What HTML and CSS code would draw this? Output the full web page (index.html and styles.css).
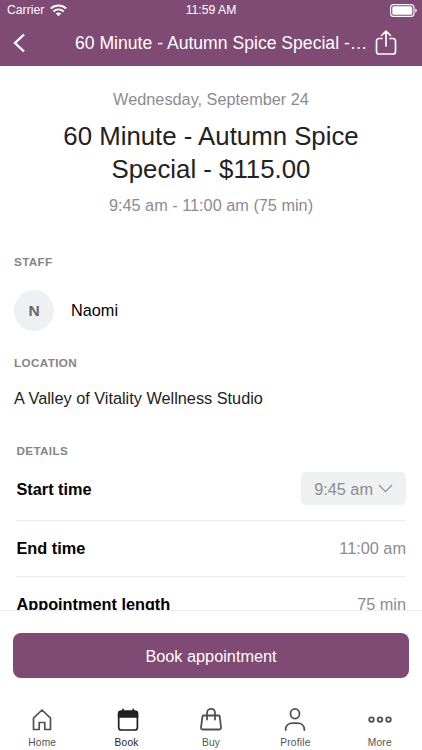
FILE: index.html
```html
<!DOCTYPE html>
<html lang="en">
<head>
<meta charset="utf-8">
<title>Book appointment</title>
<link rel="stylesheet" href="styles.css">
</head>
<body>
<div class="app">
  <header class="top">
    <div class="status">
      <div class="carrier"><span>Carrier</span>
        <svg width="17" height="13" viewBox="0 0 17 13" fill="none" stroke="#fff" stroke-width="2"><path d="M.8 4.6C5.3.6 11.700.6 16.200 4.600M3.400 7.500c3-2.700 7.200-2.700 10.200 0"/><path d="M8.500 12.300 5.700 9.600c1.600-1.400 4-1.400 5.600 0z" fill="#fff" stroke="none"/></svg>
      </div>
      <div class="clock">11:59 AM</div>
      <svg class="battery" width="28" height="13" viewBox="0 0 28 13"><rect x=".6" y=".6" width="23.400" height="11.800" rx="3" fill="none" stroke="#fff" stroke-width="1.100"/><rect x="2.300" y="2.300" width="20" height="8.400" rx="1.500" fill="#fff"/><path d="M25.300 4.500c1.900.5 1.900 3.500 0 4z" fill="#fff"/></svg>
    </div>
    <div class="nav">
      <svg class="back" width="13" height="20" viewBox="0 0 13 20" fill="none" stroke="#fff" stroke-width="2.400"><path d="M11 1.500 2 10l9 8.500"/></svg>
      <h1 class="nav-title">60 Minute - Autumn Spice Special -…</h1>
      <svg class="share" width="22" height="26" viewBox="0 0 22 26" fill="none" stroke="#fff" stroke-width="1.700" stroke-linecap="round" stroke-linejoin="round"><path d="M7 8.500H4a2.500 2.500 0 0 0-2.500 2.500v10.500A2.500 2.500 0 0 0 4 24h14a2.500 2.500 0 0 0 2.500-2.500V11A2.500 2.500 0 0 0 18 8.500h-3M11 16V1.500M6.500 5.500 11 1.200l4.500 4.300"/></svg>
    </div>
  </header>
  <main class="content">
    <section class="summary">
      <p class="muted">Wednesday, September 24</p>
      <h2>60 Minute - Autumn Spice<br>Special - $115.00</h2>
      <p class="muted">9:45 am - 11:00 am (75 min)</p>
    </section>
    <section class="staff">
      <h3>STAFF</h3>
      <div class="person"><span class="avatar">N</span><span class="name">Naomi</span></div>
    </section>
    <section class="location">
      <h3>LOCATION</h3>
      <p>A Valley of Vitality Wellness Studio</p>
    </section>
    <section class="details">
      <h3>DETAILS</h3>
      <div class="row first"><span class="label">Start time</span>
        <span class="picker">9:45 am<svg width="15" height="9" viewBox="0 0 15 9" fill="none" stroke="#8c8c8e" stroke-width="1.100"><path d="m1 1 6.500 6.700L14 1"/></svg></span></div>
      <div class="row"><span class="label">End time</span><span class="muted">11:00 am</span></div>
      <div class="row last"><span class="label">Appointment length</span><span class="muted">75 min</span></div>
    </section>
  </main>
  <div class="action"><button class="book">Book appointment</button></div>
  <nav class="tabs">
    <div class="tab"><svg width="24" height="26" viewBox="0 0 24 26" fill="none" stroke="#505158" stroke-width="1.700" stroke-linejoin="round"><path d="M3.500 22.500V11.200L12 3l8.500 8.200v11.300h-5.700v-7h-5.600v7z"/></svg><span>Home</span></div>
    <div class="tab active"><svg width="24" height="26" viewBox="0 0 24 26" fill="none" stroke="#202126" stroke-width="1.700"><rect x="3.700" y="4.300" width="18.700" height="18.700" rx="2.500"/><path d="M3.700 10V6q0-1.700 2-1.700h14.700q2 0 2 1.700v4z" fill="#202126"/><path d="M8 2.300v4M18.200 2.300v4" stroke-linecap="round"/></svg><span>Book</span></div>
    <div class="tab"><svg width="24" height="26" viewBox="0 0 24 26" fill="none" stroke="#505158" stroke-width="1.800" stroke-linecap="round" stroke-linejoin="round"><path d="M4.500 8.500h15.200q.8 0 1 .8l1.300 11q.2 2.200-2 2.200H4q-2.200 0-2-2.200l1.500-11q.2-.8 1-.8zM8 12.500V6.200C8 .5 16 .5 16 6.200v6.300"/></svg><span>Buy</span></div>
    <div class="tab"><svg width="24" height="26" viewBox="0 0 24 26" fill="none" stroke="#505158" stroke-width="1.800" stroke-linecap="round"><ellipse cx="12" cy="6.700" rx="4.500" ry="4.900"/><path d="M2.600 23c0-4.300 2.900-6.800 7-6.800h4.800c4.100 0 7 2.500 7 6.800"/></svg><span>Profile</span></div>
    <div class="tab"><svg width="24" height="26" viewBox="0 0 24 26" fill="none" stroke="#505158" stroke-width="1.800"><circle cx="3.500" cy="12.600" r="2.300"/><circle cx="12" cy="12.600" r="2.300"/><circle cx="20.500" cy="12.600" r="2.300"/></svg><span>More</span></div>
  </nav>
</div>
</body>
</html>
```
FILE: styles.css
```css
* { box-sizing: border-box; }
body, h1, h2, h3, p { margin: 0; }
body {
  font: 16.3px/20px "Liberation Sans", Arial, sans-serif;
  color: #000;
  background: #fff;
}
.app { display: flex; flex-direction: column; width: 422px; height: 750px; overflow: hidden; }
.top { height: 66px; flex: none; background: #7f4a74; color: #fff; }
.status {
  display: grid;
  grid-template-columns: 1fr auto 1fr;
  align-items: center;
  height: 20px;
  padding: 0 7px;
  font-size: 12.2px;
}
.carrier { display: flex; align-items: center; gap: 6px; }
.battery { justify-self: end; margin-right: -3px; }
.nav { display: flex; align-items: center; height: 46px; padding: 0 25px 0 13px; }
.nav-title { margin-left: 49px; font-size: 17.6px; font-weight: 400; white-space: nowrap; }
.share { margin-left: auto; }
.content { height: 544px; flex: none; overflow: hidden; }
.muted { color: #8c8c8e; }
.summary { padding-top: 23px; text-align: center; }
.summary h2 { margin: 11px 0 9px; font-size: 25.8px; line-height: 33px; font-weight: 400; color: #222; }
h3 { font-size: 11.7px; line-height: 14px; letter-spacing: .35px; color: #858587; }
.staff { padding: 40px 14px 0; }
.person { display: flex; align-items: center; gap: 17px; margin-top: 21px; }
.name { padding-bottom: 2px; }
.avatar {
  display: grid;
  place-items: center;
  width: 40px;
  height: 41px;
  border-radius: 50%;
  background: #eff0f3;
  color: #66676f;
  font-size: 15.5px;
  font-weight: 700;
}
.location { padding: 25px 14px 0; color: #222; }
.location p { margin-top: 18px; }
.details { padding: 36px 16px 0; }
.details h3, .label { padding-left: .5px; }
.row { display: flex; align-items: center; justify-content: space-between; height: 56px; padding-bottom: 2px; border-bottom: 1px solid #ededee; }
.row.first { height: 63px; padding-bottom: 1px; }
.label { font-weight: 700; }
.picker {
  display: flex;
  align-items: center;
  gap: 5px;
  height: 33px;
  padding: 0 13px;
  border-radius: 5px;
  background: #eff0f2;
  color: #8c8c8e;
}
.action { flex: none; height: 68px; padding: 22px 13px 0; border-top: 1px solid #ededee; }
.book {
  display: block;
  width: 100%;
  height: 45px;
  border: 0;
  border-radius: 8px;
  background: #7f4a74;
  color: #fff;
  font: inherit;
}
.tabs { display: grid; grid-template-columns: repeat(5, 1fr); height: 72px; padding-top: 29px; }
.tab { display: flex; flex-direction: column; align-items: center; gap: 4px; color: #505158; font-size: 10.2px; line-height: 12px; letter-spacing: .2px; }
.tab.active { color: #202126; }
```
